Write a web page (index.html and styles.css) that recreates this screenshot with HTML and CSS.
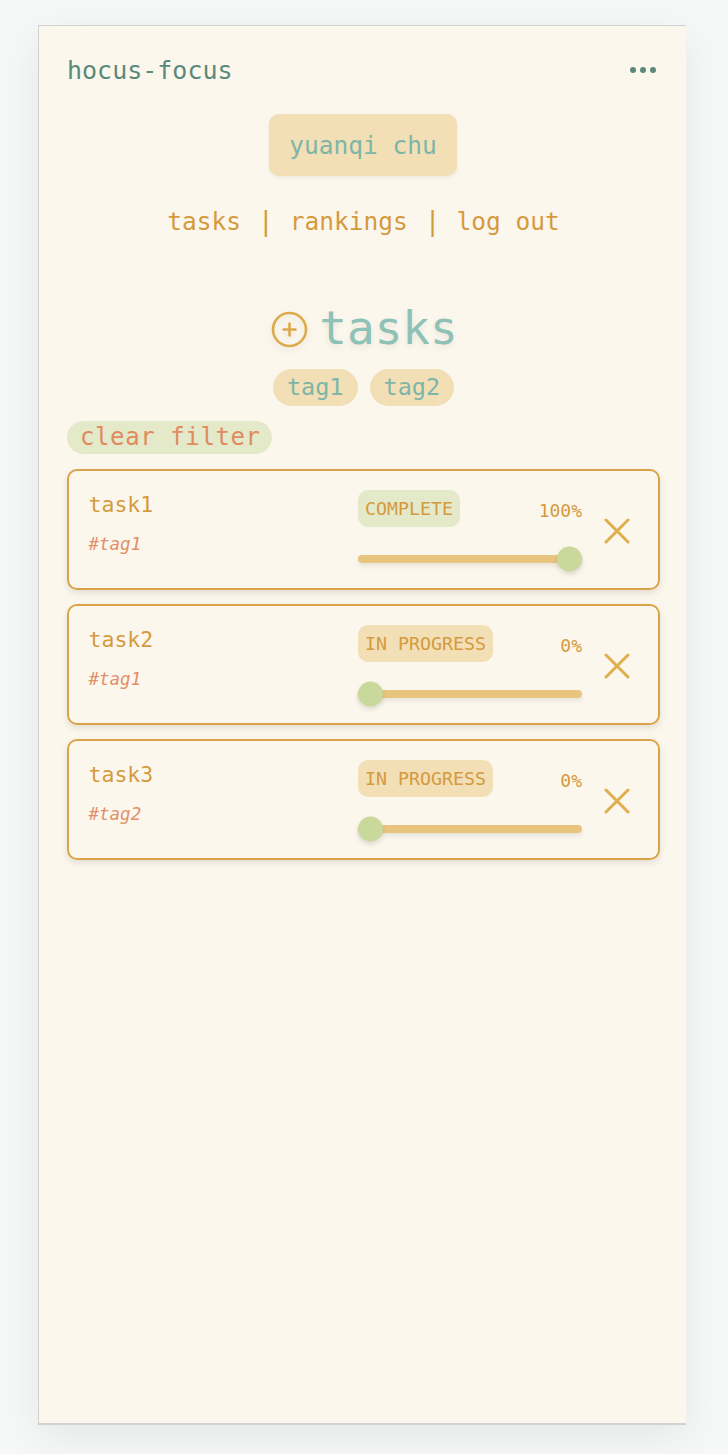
FILE: index.html
```html
<!DOCTYPE html>
<html lang="en">
<head>
<meta charset="utf-8">
<title>hocus-focus</title>
<link rel="stylesheet" href="styles.css">
</head>
<body>
<div class="device">
  <header class="topbar">
    <span class="brand">hocus-focus</span>
    <span class="dots"><i></i><i></i><i></i></span>
  </header>
  <div class="user-wrap"><button class="user">yuanqi chu</button></div>
  <nav class="nav">
    <a>tasks</a><span class="sep">|</span><a>rankings</a><span class="sep">|</span><a>log out</a>
  </nav>
  <h1 class="heading">
    <svg class="add" width="37" height="37" viewBox="0 0 37 37"><circle cx="18.5" cy="18.5" r="16.5" fill="none" stroke="#dcaa4c" stroke-width="2.6"/><path d="M18.5 12.5v12M12.5 18.5h12" stroke="#dcaa4c" stroke-width="2.6" stroke-linecap="round"/></svg>
    <span>tasks</span>
  </h1>
  <div class="tags"><span class="tag">tag1</span><span class="tag">tag2</span></div>
  <div class="filter-row"><span class="clear">clear filter</span></div>
  <div class="list">
    <div class="card">
      <div class="info"><div class="name">task1</div><div class="htag">#tag1</div></div>
      <div class="progress">
        <div class="prow"><span class="badge done">COMPLETE</span><span class="pct">100%</span></div>
        <div class="track"><div class="thumb end" style="left: 100%"></div></div>
      </div>
      <svg class="del" width="26" height="26" viewBox="0 0 26 26"><path d="M2 2L24 24M24 2L2 24" stroke="#dfae4d" stroke-width="3" stroke-linecap="round"/></svg>
    </div>
    <div class="card">
      <div class="info"><div class="name">task2</div><div class="htag">#tag1</div></div>
      <div class="progress">
        <div class="prow"><span class="badge">IN PROGRESS</span><span class="pct">0%</span></div>
        <div class="track"><div class="thumb" style="left: 0%"></div></div>
      </div>
      <svg class="del" width="26" height="26" viewBox="0 0 26 26"><path d="M2 2L24 24M24 2L2 24" stroke="#dfae4d" stroke-width="3" stroke-linecap="round"/></svg>
    </div>
    <div class="card">
      <div class="info"><div class="name">task3</div><div class="htag">#tag2</div></div>
      <div class="progress">
        <div class="prow"><span class="badge">IN PROGRESS</span><span class="pct">0%</span></div>
        <div class="track"><div class="thumb" style="left: 0%"></div></div>
      </div>
      <svg class="del" width="26" height="26" viewBox="0 0 26 26"><path d="M2 2L24 24M24 2L2 24" stroke="#dfae4d" stroke-width="3" stroke-linecap="round"/></svg>
    </div>
  </div>
</div>
</body>
</html>
```
FILE: styles.css
```css
* { box-sizing: border-box; }
html, body { margin: 0; padding: 0; }
body {
  background: #f6f7f7;
  font-family: "DejaVu Sans Mono", "Liberation Mono", monospace;
  padding: 25px 0 0 38px;
  height: 1454px;
  overflow: hidden;
}
.device {
  width: 648px;
  height: 1400px;
  background: #fcf7ec;
  border-top: 1px solid #d2d2d2;
  border-left: 1px solid #d2d2d2;
  border-bottom: 2px solid #d2d2d2;
  box-shadow: 0 12px 40px rgba(0,0,0,0.07);
  padding: 0 26px 0 28px;
  display: flex;
  flex-direction: column;
}
.topbar {
  display: flex;
  justify-content: space-between;
  align-items: center;
  height: 88px;
  padding-top: 0;
}
.brand { color: #5a897b; font-size: 25px; }
.dots { display: flex; gap: 4px; margin-right: 4px; }
.dots i { width: 6px; height: 6px; border-radius: 50%; background: #5a897b; display: block; }
.user-wrap { display: flex; justify-content: center; }
.user {
  font-family: inherit;
  font-size: 24.5px;
  color: #7db5a8;
  background: #f2dfb5;
  border: none;
  border-radius: 10px;
  height: 62px;
  padding: 0 20px;
  box-shadow: 0 2px 4px rgba(0,0,0,0.05);
  margin-left: -1px;
}
.nav {
  display: flex;
  justify-content: center;
  align-items: center;
  color: #d59a3d;
  font-size: 24.5px;
  margin-top: 25px;
  height: 40px;
}
.nav .sep { margin: 0 16px 0 17px; font-size: 26px; }
.heading {
  margin: 59px 0 0;
  display: flex;
  justify-content: center;
  align-items: center;
  gap: 11px;
  font-weight: normal;
  font-size: 46px;
  color: #8fc2b6;
  text-shadow: 0 3px 6px rgba(0,0,0,0.08);
  height: 56px;
  padding-left: 2px;
}
.heading .add { filter: drop-shadow(0 3px 3px rgba(0,0,0,0.08)); margin-top: 2px; }
.tags { display: flex; justify-content: center; gap: 12px; margin-top: 13px; }
.tag {
  background: #f2dfb5;
  color: #7db5a8;
  font-size: 23.5px;
  border-radius: 19px;
  height: 37px;
  line-height: 37px;
  padding: 0 14px;
}
.filter-row { display: flex; margin-top: 15px; }
.clear {
  background: #e3e9c9;
  color: #e08b5e;
  font-size: 24px;
  letter-spacing: 0.6px;
  border-radius: 17px;
  height: 33px;
  line-height: 33px;
  padding: 0 11px 0 13px;
}
.list { display: flex; flex-direction: column; gap: 14px; margin-top: 15px; }
.card {
  height: 121px;
  border: 2px solid #d9a34a;
  border-radius: 10px;
  box-shadow: 0 3px 7px rgba(0,0,0,0.1);
  display: flex;
  align-items: flex-start;
  padding: 18.5px 28px 0 19.5px;
}
.info { flex: 1; }
.name { color: #d59a3d; font-size: 21.5px; margin-top: 2px; line-height: 26px; }
.htag { color: #e0906a; font-size: 17.5px; font-style: italic; margin-top: 16px; }
.progress { width: 224px; }
.prow { display: flex; justify-content: space-between; align-items: center; }
.badge {
  background: #f2dfb5;
  color: #d59a3d;
  font-size: 18.3px;
  height: 37px;
  line-height: 37px;
  padding: 0 7px;
  border-radius: 10px;
}
.badge.done { background: #e3e9c9; }
.pct { color: #d59a3d; font-size: 18px; margin-top: 4px; }
.track {
  position: relative;
  height: 8px;
  background: #e8c47f;
  border-radius: 4px;
  margin-top: 28px;
  box-shadow: 0 3px 5px rgba(0,0,0,0.08);
}
.thumb {
  position: absolute;
  top: 50%;
  width: 25px;
  height: 25px;
  border-radius: 50%;
  background: #c9d89b;
  transform: translate(0, -50%);
  box-shadow: 0 3px 5px rgba(0,0,0,0.12);
}
.thumb.end { margin-left: -25px; }
.del { margin: 28px 0 0 22px; flex: none; }
```
